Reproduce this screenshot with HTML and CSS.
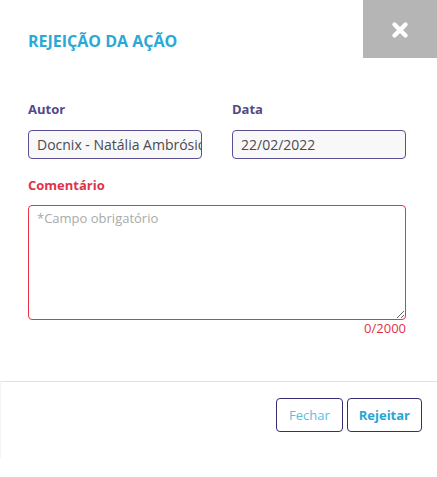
FILE: index.html
```html
<!DOCTYPE html>
<html lang="pt">
<head>
<meta charset="utf-8">
<link rel="stylesheet" href="styles.css">
</head>
<body>
<div class="modal">
  <div class="header">
    <h1 class="title">REJEIÇÃO DA AÇÃO</h1>
    <button class="close" aria-label="Fechar">
      <svg width="18" height="18" viewBox="0 0 18 18"><path d="M3.5 3.5 L14.5 14.5 M14.5 3.5 L3.5 14.5" stroke="#fff" stroke-width="4.4" stroke-linecap="round"/></svg>
    </button>
  </div>
  <div class="body">
    <div class="row">
      <div class="field">
        <label class="label">Autor</label>
        <div class="input">Docnix - Natália Ambrósio</div>
      </div>
      <div class="field">
        <label class="label">Data</label>
        <div class="input">22/02/2022</div>
      </div>
    </div>
    <div class="field comment">
      <label class="label error">Comentário</label>
      <textarea class="textarea" placeholder="*Campo obrigatório"></textarea>
      <div class="counter">0/2000</div>
    </div>
  </div>
  <div class="footer">
    <button class="btn">Fechar</button>
    <button class="btn primary">Rejeitar</button>
  </div>
</div>
</body>
</html>
```
FILE: styles.css
```css
* { box-sizing: border-box; }
body {
  margin: 0;
  background: #fff;
  font-family: "Open Sans", "Lato", sans-serif;
}
.modal {
  width: 437px;
  height: 458px;
  background: #fff;
  display: flex;
  flex-direction: column;
}
.header {
  display: flex;
  justify-content: space-between;
  align-items: flex-start;
  height: 58px;
}
.title {
  margin: 30px 0 0 28px;
  font-size: 16px;
  line-height: 22px;
  font-weight: 700;
  color: #2aa8d6;
  letter-spacing: 0;
}
.close {
  width: 74px;
  height: 58px;
  border: none;
  background: #b5b5b5;
  display: flex;
  align-items: center;
  justify-content: center;
  padding: 0;
  padding-top: 1px;
}
.body {
  padding: 42px 31px 0 28px;
}
.row {
  display: grid;
  grid-template-columns: minmax(0, 1fr) minmax(0, 1fr);
  column-gap: 30px;
}
.field {
  display: flex;
  flex-direction: column;
  min-width: 0;
}
.label {
  font-size: 13px;
  line-height: 18px;
  font-weight: 700;
  color: #544989;
  margin-bottom: 12px;
}
.label.error { color: #e23249; }
.input {
  height: 29px;
  border: 1px solid #5a4e95;
  border-radius: 4px;
  background: #f8f8f8;
  padding: 4px 8px 0 8px;
  font-size: 14px;
  line-height: 19px;
  color: #4a4a55;
  white-space: nowrap;
  overflow: hidden;
}
.comment { margin-top: 17px; }
.comment .label { margin-bottom: 11px; }
.textarea {
  height: 115px;
  border: 1px solid #e8334a;
  border-radius: 4px;
  background: #fff;
  padding: 3px 8px;
  font-family: inherit;
  font-size: 13px;
  line-height: 18px;
  resize: vertical;
  outline: none;
  margin: 0;
  display: block;
}
.textarea::placeholder { color: #a9a9a9; }
.counter {
  text-align: right;
  font-size: 13px;
  line-height: 16px;
  color: #e23249;
}
.footer {
  margin-top: auto;
  border-top: 1px solid #e2e2e2;
  border-left: 1px solid #f4f4f4;
  height: 77px;
  display: flex;
  justify-content: flex-end;
  align-items: flex-start;
  gap: 4px;
  padding: 16px 15px 0 0;
}
.btn {
  height: 34px;
  padding: 0 12px;
  border: 1px solid #3b2b70;
  border-radius: 4px;
  background: #fff;
  font-family: inherit;
  font-size: 13px;
  color: #5cbde2;
  cursor: pointer;
}
.btn.primary {
  font-weight: 700;
  color: #27a6d6;
  padding: 0 11px;
}
```
